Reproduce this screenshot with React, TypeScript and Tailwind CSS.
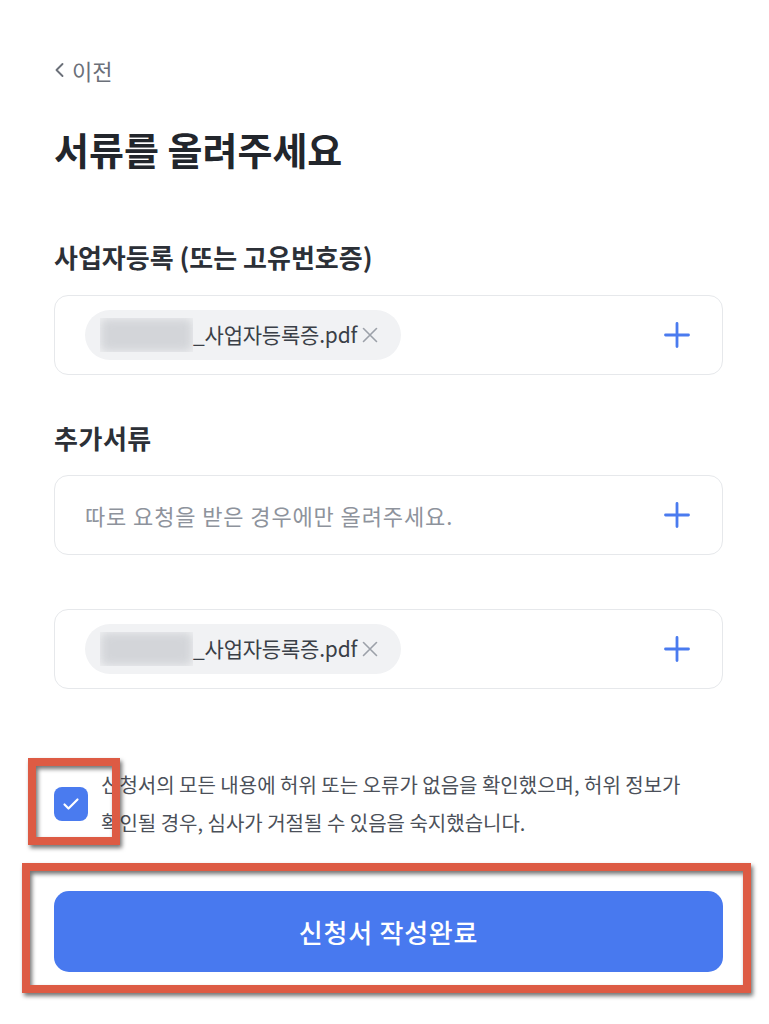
import React, { useState, type JSX } from "react";

const FONT = { fontFamily: '"Noto Sans CJK KR", "Noto Sans", sans-serif' };

function PlusIcon() {
  return (
    <svg width="28" height="28" viewBox="0 0 28 28" fill="none">
      <path d="M14 2.5v23M2.5 14h23" stroke="#4a7bef" strokeWidth="2.8" strokeLinecap="round" />
    </svg>
  );
}

function FileChip({ name }: { name: string }) {
  return (
    <div className="flex h-[50px] w-[316px] items-center rounded-full bg-[#f1f2f4] pl-[15px] pr-[16px]">
      <div className="h-[34px] w-[93px] shrink-0 overflow-hidden">
        <div className="h-full w-full rounded-md bg-[#d3d5d9] blur-[5px]" />
      </div>
      <span className="text-[21px] tracking-[-0.01em] text-[#3a3f47]">{name}</span>
      <svg className="ml-[3px] shrink-0" width="20" height="20" viewBox="0 0 20 20" fill="none">
        <path d="M3.5 3.5l13 13M16.5 3.5l-13 13" stroke="#9ca1a9" strokeWidth="1.6" strokeLinecap="round" />
      </svg>
    </div>
  );
}

function UploadBox({ children }: { children: React.ReactNode }) {
  return (
    <div className="flex h-[80px] items-center justify-between rounded-[14px] border border-[#e6e8eb] bg-white pl-[30px] pr-[31px]">
      <div className="flex items-center">{children}</div>
      <button type="button" className="flex items-center">
        <PlusIcon />
      </button>
    </div>
  );
}

export default function App(): JSX.Element {
  const [agree, setAgree] = useState(true);

  return (
    <div className="relative min-h-[1024px] bg-white" style={FONT}>
      <div className="pl-[54px] pr-[46px] pt-[56px]">
        <button type="button" className="flex h-[28px] items-center gap-[7px] text-[22px] text-[#6b7079]">
          <svg width="11" height="18" viewBox="0 0 11 18" fill="none">
            <path d="M8.5 3L2.5 9l6 6" stroke="#6b7079" strokeWidth="1.9" strokeLinecap="round" strokeLinejoin="round" />
          </svg>
          <span>이전</span>
        </button>

        <h1 className="mt-[42px] text-[38px] font-bold leading-[46px] text-[#22262c]">
          서류를 올려주세요
        </h1>

        <div className="mt-[69px] text-[26px] font-semibold leading-[32px] text-[#2c3037]">
          사업자등록 (또는 고유번호증)
        </div>
        <div className="mt-[22px]">
          <UploadBox>
            <FileChip name="_사업자등록증.pdf" />
          </UploadBox>
        </div>

        <div className="mt-[47px] text-[26px] font-semibold leading-[32px] tracking-[0.02em] text-[#2c3037]">
          추가서류
        </div>
        <div className="mt-[21px]">
          <UploadBox>
            <span className="text-[22px] tracking-[0.04em] text-[#8e939c]">
              따로 요청을 받은 경우에만 올려주세요.
            </span>
          </UploadBox>
        </div>
        <div className="mt-[54px]">
          <UploadBox>
            <FileChip name="_사업자등록증.pdf" />
          </UploadBox>
        </div>

        <label className="mt-[77px] flex cursor-pointer items-center gap-[13px]">
          <button
            type="button"
            onClick={() => setAgree(!agree)}
            className={`flex h-[34px] w-[34px] shrink-0 items-center justify-center rounded-[8px] ${
              agree ? "bg-[#4a7bef]" : "border border-[#cfd3d9] bg-white"
            }`}
          >
            {agree && (
              <svg width="22" height="22" viewBox="0 0 22 22" fill="none">
                <path d="M4.5 11.5l4 4 9-9" stroke="white" strokeWidth="2.2" strokeLinecap="round" strokeLinejoin="round" />
              </svg>
            )}
          </button>
          <span className="text-[20px] leading-[38px] text-[#4b5059]">
            신청서의 모든 내용에 허위 또는 오류가 없음을 확인했으며, 허위 정보가
            <br />
            확인될 경우, 심사가 거절될 수 있음을 숙지했습니다.
          </span>
        </label>

        <button
          type="button"
          className="mt-[49px] flex h-[81px] w-full items-center justify-center rounded-[15px] bg-[#4879ef] text-[26px] font-medium tracking-[0.03em] text-white"
        >
          신청서 작성완료
        </button>
      </div>

      {/* annotation boxes */}
      <div className="pointer-events-none absolute left-[28px] top-[758px] h-[87px] w-[92px] border-[8px] border-[#dd5b44] drop-shadow-[2px_3px_2px_rgba(0,0,0,0.55)]" />
      <div className="pointer-events-none absolute left-[22px] top-[863px] h-[130px] w-[729px] border-[8px] border-[#dd5b44] drop-shadow-[2px_3px_2px_rgba(0,0,0,0.55)]" />
    </div>
  );
}
